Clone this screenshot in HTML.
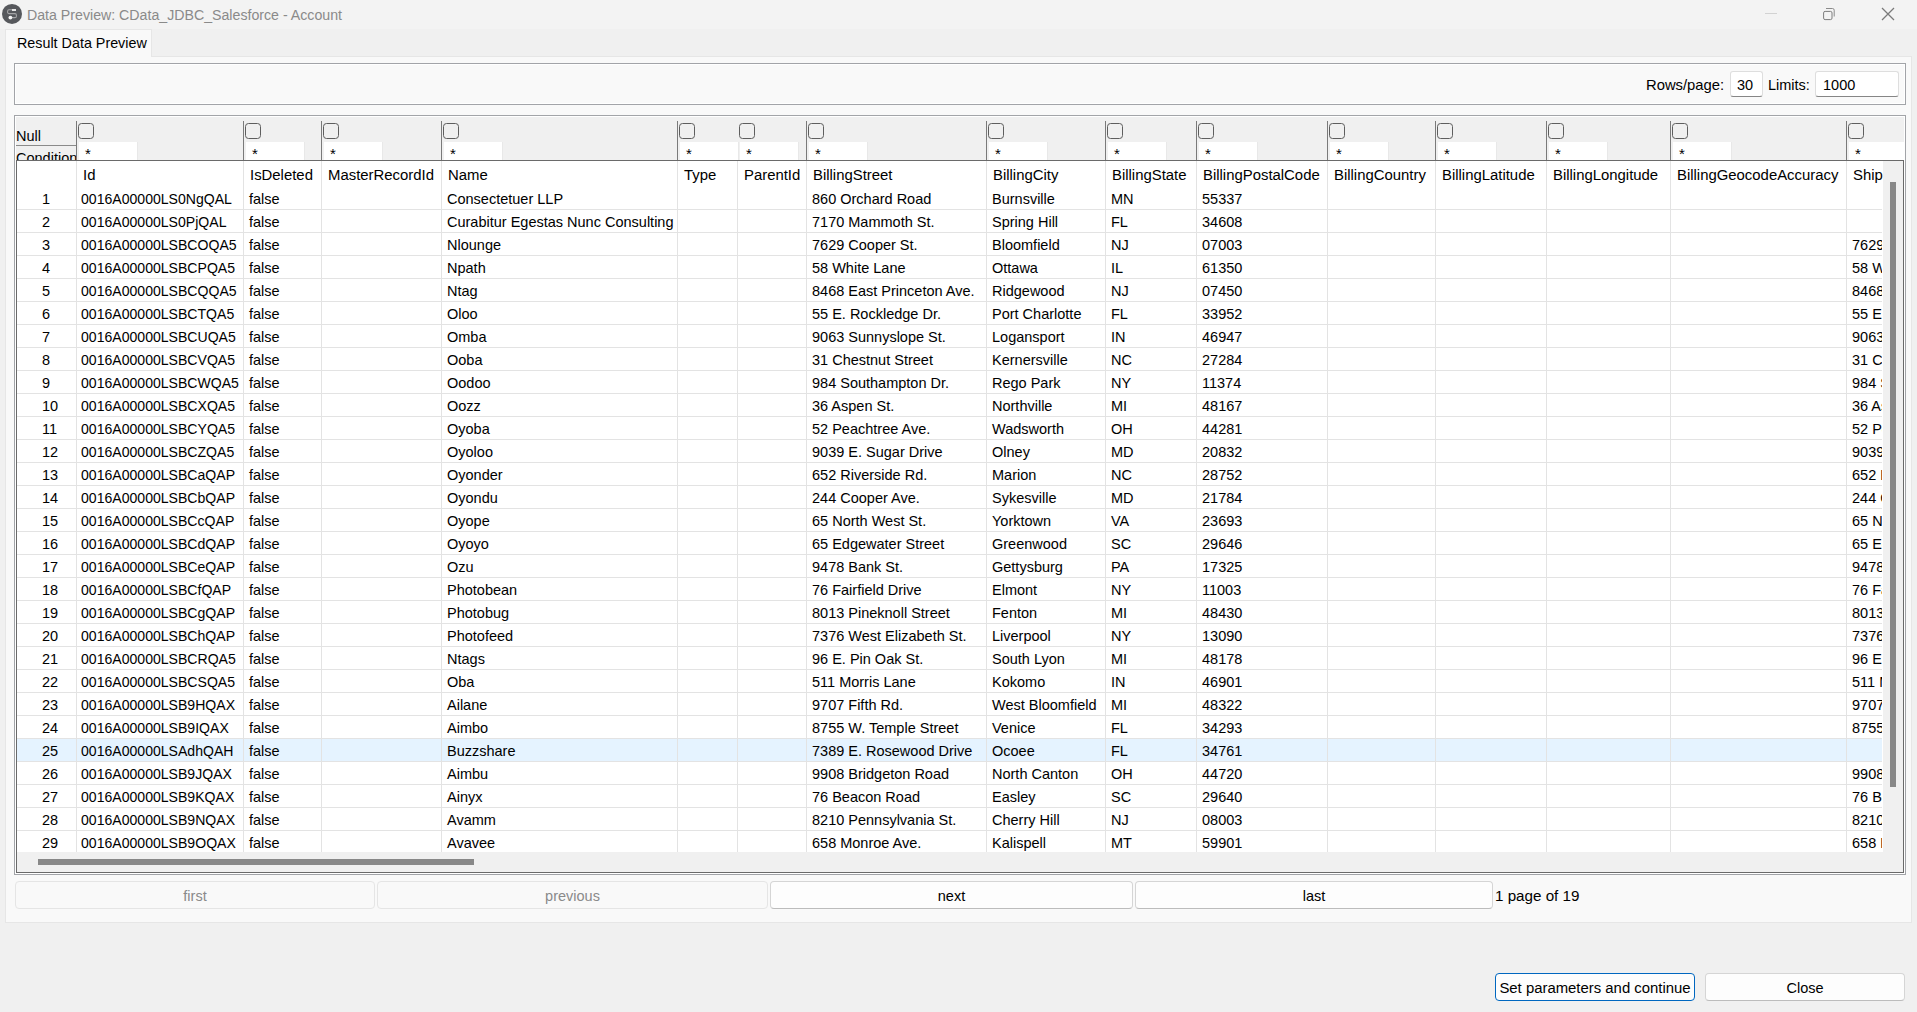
<!DOCTYPE html>
<html><head><meta charset="utf-8">
<style>
*{box-sizing:border-box}
html,body{margin:0;padding:0}
body{width:1917px;height:1012px;overflow:hidden;position:relative;background:#f0f0f0;font-family:"Liberation Sans",sans-serif;font-size:14.5px;color:#000}
.abs{position:absolute}
#titlebar{position:absolute;left:0;top:0;width:1917px;height:29px;background:#f3f3f3}
#title{position:absolute;left:27px;top:5.5px;font-size:15.5px;line-height:18px;color:#8a8a8a;white-space:nowrap;transform:scaleX(0.914);transform-origin:0 0}
#tabbar{position:absolute;left:152px;top:29px;width:1760px;height:27px;background:#f0f0f0}
#tab{position:absolute;left:5px;top:29px;width:147px;height:28px;background:#f9f9f9;border:1px solid #e6e6e6;border-bottom:none;z-index:2}
#tab span{position:absolute;left:10.5px;top:4px;font-size:15px;line-height:18px;white-space:nowrap;transform:scaleX(0.955);transform-origin:0 0}
#panel{position:absolute;left:5px;top:56px;width:1907px;height:867px;background:#f9f9f9;border:1px solid #e6e6e6}
#box1{position:absolute;left:14px;top:63px;width:1892px;height:42px;border:1px solid #a2a4a8;background:#f9f9f9;box-shadow:inset 1px 1px 0 #fff,inset -1px -1px 0 #fff}
.lbl{position:absolute;white-space:nowrap;line-height:18px}
.inp{position:absolute;background:#fff;border:1px solid #dedede;border-bottom:1px solid #868686;border-radius:3px}
#box2{position:absolute;left:14px;top:115px;width:1892px;height:760px;border:1px solid #a2a4a8;background:#f9f9f9;box-shadow:inset 1px 1px 0 #fff,inset -1px -1px 0 #fff}
#fhdr{position:absolute;left:16px;top:117px;width:1888px;height:44px;background:#f0f0f0}
.fsep{position:absolute;top:121px;width:1px;height:40px;background:#7a7a7a}
.cb{position:absolute;top:123px;width:16px;height:16px;border:1.2px solid #5e5e5e;border-radius:3.5px;background:#f0f0f0}
.tf{position:absolute;top:142px;height:18px;background:#fff;border-right:1px solid #e8e8e8}
.tf span{position:absolute;left:6px;top:3px;font-size:15px;line-height:18px}
#nullsep{position:absolute;left:16px;top:145px;width:60px;height:1px;background:#8a8a8a}
#nullsep2{position:absolute;left:16px;top:146px;width:60px;height:1px;background:#f9f9f9}
#table{position:absolute;left:16px;top:160px;width:1888px;height:713px;border:1px solid #6a6a6a;background:#f0f0f0;overflow:hidden}
#grid{position:absolute;left:0;top:0;width:1866px;height:691px;background:#fff;overflow:hidden}
.vl{position:absolute;top:0;width:1px;height:691px;background:#e3e3e3;z-index:1}
.ht{position:absolute;top:0;line-height:26px;padding-top:1px;white-space:nowrap;font-size:14.9px}
.row{position:absolute;left:0;width:1865px;overflow:hidden;height:23px;border-bottom:1px solid #e3e3e3}
.row.sel{background:#e5f3ff}
.row span{position:absolute;top:1px;line-height:22px;white-space:nowrap}
.rn{left:25px}
.idc{transform:scaleX(0.97);transform-origin:0 0}
#vsb{position:absolute;left:1866px;top:0;width:20px;height:691px;background:#f0f0f0}
#vthumb{position:absolute;left:1873px;top:21px;width:6px;height:605px;background:#888;border-radius:0}
#hthumb{position:absolute;left:21px;top:698px;width:436px;height:6px;background:#888}
.btn{position:absolute;top:881px;height:28px;border:1px solid #e5e5e5;border-radius:4px;background:#f9f9f9;text-align:center;line-height:26px;padding-top:1px;color:#8a8a8a}
.btn.en{background:#fdfdfd;border-color:#d5d5d5;border-bottom-color:#bcbcbc;color:#000}
</style></head><body>
<div id="titlebar">
  <svg class="abs" style="left:0;top:0" width="30" height="28" viewBox="0 0 30 28">
    <circle cx="12" cy="13.9" r="10" fill="#56585c"/>
    <path d="M11.5 17.6 H15 a1.4 1.4 0 0 0 1.4 -1.4 V15 a1.4 1.4 0 0 0 -1.4 -1.4 H9 a1.4 1.4 0 0 1 -1.4 -1.4 V11.2 a1.4 1.4 0 0 1 1.4 -1.4 H12.5" fill="none" stroke="#a4a4a6" stroke-width="1.1"/>
    <rect x="12" y="9" width="4" height="2" fill="#e6e6e6"/>
    <circle cx="10.4" cy="17.6" r="1.9" fill="#f4f4f4"/>
  </svg>
  <div id="title">Data Preview: CData_JDBC_Salesforce - Account</div>
  <div class="abs" style="left:1765px;top:13px;width:12px;height:1px;background:#d2d2d2"></div>
  <svg class="abs" style="left:1820px;top:6px" width="18" height="16" viewBox="0 0 18 16">
    <rect x="3.6" y="5.4" width="8.4" height="8.2" rx="1.5" fill="none" stroke="#7c7c7c" stroke-width="1"/>
    <path d="M6 2.5 H12.5 a1.7 1.7 0 0 1 1.7 1.7 V10.5" fill="none" stroke="#8a8a8a" stroke-width="1"/>
  </svg>
  <svg class="abs" style="left:1880px;top:6px" width="16" height="16" viewBox="0 0 16 16">
    <path d="M2 2 L14 14 M14 2 L2 14" stroke="#7a7a7a" stroke-width="1.25"/>
  </svg>
</div>
<div id="panel"></div>
<div id="tabbar"></div>
<div id="tab"><span>Result Data Preview</span></div>
<div id="box1">
  <div class="lbl" style="left:1631px;top:12px;font-size:14.8px">Rows/page:</div>
  <div class="inp" style="left:1715px;top:7px;width:33px;height:26px"><span class="lbl" style="left:6px;top:4px">30</span></div>
  <div class="lbl" style="left:1753px;top:12px">Limits:</div>
  <div class="inp" style="left:1800px;top:7px;width:84px;height:26px"><span class="lbl" style="left:7px;top:4px">1000</span></div>
</div>
<div id="box2"></div>
<div id="fhdr"></div>
<div class="lbl" style="left:16px;top:127px">Null</div>
<div class="lbl" style="left:16px;top:149px;width:60px;height:11px;overflow:hidden">Condition</div>
<div id="nullsep"></div>
<div class="fsep" style="left:76px"></div>
<div class="fsep" style="left:76px"></div>
<div class="cb" style="left:78px"></div>
<div class="tf" style="left:79px;width:59px;"><span>*</span></div>
<div class="fsep" style="left:243px"></div>
<div class="cb" style="left:245px"></div>
<div class="tf" style="left:246px;width:59px;"><span>*</span></div>
<div class="fsep" style="left:321px"></div>
<div class="cb" style="left:323px"></div>
<div class="tf" style="left:324px;width:59px;"><span>*</span></div>
<div class="fsep" style="left:441px"></div>
<div class="cb" style="left:443px"></div>
<div class="tf" style="left:444px;width:59px;"><span>*</span></div>
<div class="fsep" style="left:677px"></div>
<div class="cb" style="left:679px"></div>
<div class="tf" style="left:680px;width:59px;"><span>*</span></div>
<div class="cb" style="left:739px"></div>
<div class="tf" style="left:740px;width:59px;"><span>*</span></div>
<div class="fsep" style="left:806px"></div>
<div class="cb" style="left:808px"></div>
<div class="tf" style="left:809px;width:59px;"><span>*</span></div>
<div class="fsep" style="left:986px"></div>
<div class="cb" style="left:988px"></div>
<div class="tf" style="left:989px;width:59px;"><span>*</span></div>
<div class="fsep" style="left:1105px"></div>
<div class="cb" style="left:1107px"></div>
<div class="tf" style="left:1108px;width:59px;"><span>*</span></div>
<div class="fsep" style="left:1196px"></div>
<div class="cb" style="left:1198px"></div>
<div class="tf" style="left:1199px;width:59px;"><span>*</span></div>
<div class="fsep" style="left:1327px"></div>
<div class="cb" style="left:1329px"></div>
<div class="tf" style="left:1330px;width:59px;"><span>*</span></div>
<div class="fsep" style="left:1435px"></div>
<div class="cb" style="left:1437px"></div>
<div class="tf" style="left:1438px;width:59px;"><span>*</span></div>
<div class="fsep" style="left:1546px"></div>
<div class="cb" style="left:1548px"></div>
<div class="tf" style="left:1549px;width:59px;"><span>*</span></div>
<div class="fsep" style="left:1670px"></div>
<div class="cb" style="left:1672px"></div>
<div class="tf" style="left:1673px;width:59px;"><span>*</span></div>
<div class="fsep" style="left:1846px"></div>
<div class="cb" style="left:1848px"></div>
<div class="tf" style="left:1849px;width:55px;border-right:none;"><span>*</span></div>
<div id="table">
 <div id="grid">
<div class="vl" style="left:59px"></div>
<div class="vl" style="left:226px"></div>
<div class="vl" style="left:304px"></div>
<div class="vl" style="left:424px"></div>
<div class="vl" style="left:660px"></div>
<div class="vl" style="left:720px"></div>
<div class="vl" style="left:789px"></div>
<div class="vl" style="left:969px"></div>
<div class="vl" style="left:1088px"></div>
<div class="vl" style="left:1179px"></div>
<div class="vl" style="left:1310px"></div>
<div class="vl" style="left:1418px"></div>
<div class="vl" style="left:1529px"></div>
<div class="vl" style="left:1653px"></div>
<div class="vl" style="left:1829px"></div>
<div class="vl" style="left:59px"></div>
<div class="ht" style="left:66px">Id</div>
<div class="ht" style="left:233px">IsDeleted</div>
<div class="ht" style="left:311px">MasterRecordId</div>
<div class="ht" style="left:431px">Name</div>
<div class="ht" style="left:667px">Type</div>
<div class="ht" style="left:727px">ParentId</div>
<div class="ht" style="left:796px">BillingStreet</div>
<div class="ht" style="left:976px">BillingCity</div>
<div class="ht" style="left:1095px">BillingState</div>
<div class="ht" style="left:1186px">BillingPostalCode</div>
<div class="ht" style="left:1317px">BillingCountry</div>
<div class="ht" style="left:1425px">BillingLatitude</div>
<div class="ht" style="left:1536px">BillingLongitude</div>
<div class="ht" style="left:1660px">BillingGeocodeAccuracy</div>
<div class="ht" style="left:1836px">Ship</div>
<div class="row" style="top:26px"><span class="rn">1</span><span class="c idc" style="left:64px">0016A00000LS0NgQAL</span><span class="c" style="left:232px">false</span><span class="c" style="left:430px">Consectetuer LLP</span><span class="c" style="left:795px">860 Orchard Road</span><span class="c" style="left:975px">Burnsville</span><span class="c" style="left:1094px">MN</span><span class="c" style="left:1185px">55337</span></div>
<div class="row" style="top:49px"><span class="rn">2</span><span class="c idc" style="left:64px">0016A00000LS0PjQAL</span><span class="c" style="left:232px">false</span><span class="c" style="left:430px">Curabitur Egestas Nunc Consulting</span><span class="c" style="left:795px">7170 Mammoth St.</span><span class="c" style="left:975px">Spring Hill</span><span class="c" style="left:1094px">FL</span><span class="c" style="left:1185px">34608</span></div>
<div class="row" style="top:72px"><span class="rn">3</span><span class="c idc" style="left:64px">0016A00000LSBCOQA5</span><span class="c" style="left:232px">false</span><span class="c" style="left:430px">Nlounge</span><span class="c" style="left:795px">7629 Cooper St.</span><span class="c" style="left:975px">Bloomfield</span><span class="c" style="left:1094px">NJ</span><span class="c" style="left:1185px">07003</span><span class="c" style="left:1835px">7629 Cooper St.</span></div>
<div class="row" style="top:95px"><span class="rn">4</span><span class="c idc" style="left:64px">0016A00000LSBCPQA5</span><span class="c" style="left:232px">false</span><span class="c" style="left:430px">Npath</span><span class="c" style="left:795px">58 White Lane</span><span class="c" style="left:975px">Ottawa</span><span class="c" style="left:1094px">IL</span><span class="c" style="left:1185px">61350</span><span class="c" style="left:1835px">58 White Lane</span></div>
<div class="row" style="top:118px"><span class="rn">5</span><span class="c idc" style="left:64px">0016A00000LSBCQQA5</span><span class="c" style="left:232px">false</span><span class="c" style="left:430px">Ntag</span><span class="c" style="left:795px">8468 East Princeton Ave.</span><span class="c" style="left:975px">Ridgewood</span><span class="c" style="left:1094px">NJ</span><span class="c" style="left:1185px">07450</span><span class="c" style="left:1835px">8468 East Princeton Ave.</span></div>
<div class="row" style="top:141px"><span class="rn">6</span><span class="c idc" style="left:64px">0016A00000LSBCTQA5</span><span class="c" style="left:232px">false</span><span class="c" style="left:430px">Oloo</span><span class="c" style="left:795px">55 E. Rockledge Dr.</span><span class="c" style="left:975px">Port Charlotte</span><span class="c" style="left:1094px">FL</span><span class="c" style="left:1185px">33952</span><span class="c" style="left:1835px">55 E. Rockledge Dr.</span></div>
<div class="row" style="top:164px"><span class="rn">7</span><span class="c idc" style="left:64px">0016A00000LSBCUQA5</span><span class="c" style="left:232px">false</span><span class="c" style="left:430px">Omba</span><span class="c" style="left:795px">9063 Sunnyslope St.</span><span class="c" style="left:975px">Logansport</span><span class="c" style="left:1094px">IN</span><span class="c" style="left:1185px">46947</span><span class="c" style="left:1835px">9063 Sunnyslope St.</span></div>
<div class="row" style="top:187px"><span class="rn">8</span><span class="c idc" style="left:64px">0016A00000LSBCVQA5</span><span class="c" style="left:232px">false</span><span class="c" style="left:430px">Ooba</span><span class="c" style="left:795px">31 Chestnut Street</span><span class="c" style="left:975px">Kernersville</span><span class="c" style="left:1094px">NC</span><span class="c" style="left:1185px">27284</span><span class="c" style="left:1835px">31 Chestnut Street</span></div>
<div class="row" style="top:210px"><span class="rn">9</span><span class="c idc" style="left:64px">0016A00000LSBCWQA5</span><span class="c" style="left:232px">false</span><span class="c" style="left:430px">Oodoo</span><span class="c" style="left:795px">984 Southampton Dr.</span><span class="c" style="left:975px">Rego Park</span><span class="c" style="left:1094px">NY</span><span class="c" style="left:1185px">11374</span><span class="c" style="left:1835px">984 Southampton Dr.</span></div>
<div class="row" style="top:233px"><span class="rn">10</span><span class="c idc" style="left:64px">0016A00000LSBCXQA5</span><span class="c" style="left:232px">false</span><span class="c" style="left:430px">Oozz</span><span class="c" style="left:795px">36 Aspen St.</span><span class="c" style="left:975px">Northville</span><span class="c" style="left:1094px">MI</span><span class="c" style="left:1185px">48167</span><span class="c" style="left:1835px">36 Aspen St.</span></div>
<div class="row" style="top:256px"><span class="rn">11</span><span class="c idc" style="left:64px">0016A00000LSBCYQA5</span><span class="c" style="left:232px">false</span><span class="c" style="left:430px">Oyoba</span><span class="c" style="left:795px">52 Peachtree Ave.</span><span class="c" style="left:975px">Wadsworth</span><span class="c" style="left:1094px">OH</span><span class="c" style="left:1185px">44281</span><span class="c" style="left:1835px">52 Peachtree Ave.</span></div>
<div class="row" style="top:279px"><span class="rn">12</span><span class="c idc" style="left:64px">0016A00000LSBCZQA5</span><span class="c" style="left:232px">false</span><span class="c" style="left:430px">Oyoloo</span><span class="c" style="left:795px">9039 E. Sugar Drive</span><span class="c" style="left:975px">Olney</span><span class="c" style="left:1094px">MD</span><span class="c" style="left:1185px">20832</span><span class="c" style="left:1835px">9039 E. Sugar Drive</span></div>
<div class="row" style="top:302px"><span class="rn">13</span><span class="c idc" style="left:64px">0016A00000LSBCaQAP</span><span class="c" style="left:232px">false</span><span class="c" style="left:430px">Oyonder</span><span class="c" style="left:795px">652 Riverside Rd.</span><span class="c" style="left:975px">Marion</span><span class="c" style="left:1094px">NC</span><span class="c" style="left:1185px">28752</span><span class="c" style="left:1835px">652 Riverside Rd.</span></div>
<div class="row" style="top:325px"><span class="rn">14</span><span class="c idc" style="left:64px">0016A00000LSBCbQAP</span><span class="c" style="left:232px">false</span><span class="c" style="left:430px">Oyondu</span><span class="c" style="left:795px">244 Cooper Ave.</span><span class="c" style="left:975px">Sykesville</span><span class="c" style="left:1094px">MD</span><span class="c" style="left:1185px">21784</span><span class="c" style="left:1835px">244 Cooper Ave.</span></div>
<div class="row" style="top:348px"><span class="rn">15</span><span class="c idc" style="left:64px">0016A00000LSBCcQAP</span><span class="c" style="left:232px">false</span><span class="c" style="left:430px">Oyope</span><span class="c" style="left:795px">65 North West St.</span><span class="c" style="left:975px">Yorktown</span><span class="c" style="left:1094px">VA</span><span class="c" style="left:1185px">23693</span><span class="c" style="left:1835px">65 North West St.</span></div>
<div class="row" style="top:371px"><span class="rn">16</span><span class="c idc" style="left:64px">0016A00000LSBCdQAP</span><span class="c" style="left:232px">false</span><span class="c" style="left:430px">Oyoyo</span><span class="c" style="left:795px">65 Edgewater Street</span><span class="c" style="left:975px">Greenwood</span><span class="c" style="left:1094px">SC</span><span class="c" style="left:1185px">29646</span><span class="c" style="left:1835px">65 Edgewater Street</span></div>
<div class="row" style="top:394px"><span class="rn">17</span><span class="c idc" style="left:64px">0016A00000LSBCeQAP</span><span class="c" style="left:232px">false</span><span class="c" style="left:430px">Ozu</span><span class="c" style="left:795px">9478 Bank St.</span><span class="c" style="left:975px">Gettysburg</span><span class="c" style="left:1094px">PA</span><span class="c" style="left:1185px">17325</span><span class="c" style="left:1835px">9478 Bank St.</span></div>
<div class="row" style="top:417px"><span class="rn">18</span><span class="c idc" style="left:64px">0016A00000LSBCfQAP</span><span class="c" style="left:232px">false</span><span class="c" style="left:430px">Photobean</span><span class="c" style="left:795px">76 Fairfield Drive</span><span class="c" style="left:975px">Elmont</span><span class="c" style="left:1094px">NY</span><span class="c" style="left:1185px">11003</span><span class="c" style="left:1835px">76 Fairfield Drive</span></div>
<div class="row" style="top:440px"><span class="rn">19</span><span class="c idc" style="left:64px">0016A00000LSBCgQAP</span><span class="c" style="left:232px">false</span><span class="c" style="left:430px">Photobug</span><span class="c" style="left:795px">8013 Pineknoll Street</span><span class="c" style="left:975px">Fenton</span><span class="c" style="left:1094px">MI</span><span class="c" style="left:1185px">48430</span><span class="c" style="left:1835px">8013 Pineknoll Street</span></div>
<div class="row" style="top:463px"><span class="rn">20</span><span class="c idc" style="left:64px">0016A00000LSBChQAP</span><span class="c" style="left:232px">false</span><span class="c" style="left:430px">Photofeed</span><span class="c" style="left:795px">7376 West Elizabeth St.</span><span class="c" style="left:975px">Liverpool</span><span class="c" style="left:1094px">NY</span><span class="c" style="left:1185px">13090</span><span class="c" style="left:1835px">7376 West Elizabeth St.</span></div>
<div class="row" style="top:486px"><span class="rn">21</span><span class="c idc" style="left:64px">0016A00000LSBCRQA5</span><span class="c" style="left:232px">false</span><span class="c" style="left:430px">Ntags</span><span class="c" style="left:795px">96 E. Pin Oak St.</span><span class="c" style="left:975px">South Lyon</span><span class="c" style="left:1094px">MI</span><span class="c" style="left:1185px">48178</span><span class="c" style="left:1835px">96 E. Pin Oak St.</span></div>
<div class="row" style="top:509px"><span class="rn">22</span><span class="c idc" style="left:64px">0016A00000LSBCSQA5</span><span class="c" style="left:232px">false</span><span class="c" style="left:430px">Oba</span><span class="c" style="left:795px">511 Morris Lane</span><span class="c" style="left:975px">Kokomo</span><span class="c" style="left:1094px">IN</span><span class="c" style="left:1185px">46901</span><span class="c" style="left:1835px">511 Morris Lane</span></div>
<div class="row" style="top:532px"><span class="rn">23</span><span class="c idc" style="left:64px">0016A00000LSB9HQAX</span><span class="c" style="left:232px">false</span><span class="c" style="left:430px">Ailane</span><span class="c" style="left:795px">9707 Fifth Rd.</span><span class="c" style="left:975px">West Bloomfield</span><span class="c" style="left:1094px">MI</span><span class="c" style="left:1185px">48322</span><span class="c" style="left:1835px">9707 Fifth Rd.</span></div>
<div class="row" style="top:555px"><span class="rn">24</span><span class="c idc" style="left:64px">0016A00000LSB9IQAX</span><span class="c" style="left:232px">false</span><span class="c" style="left:430px">Aimbo</span><span class="c" style="left:795px">8755 W. Temple Street</span><span class="c" style="left:975px">Venice</span><span class="c" style="left:1094px">FL</span><span class="c" style="left:1185px">34293</span><span class="c" style="left:1835px">8755 W. Temple Street</span></div>
<div class="row sel" style="top:578px"><span class="rn">25</span><span class="c idc" style="left:64px">0016A00000LSAdhQAH</span><span class="c" style="left:232px">false</span><span class="c" style="left:430px">Buzzshare</span><span class="c" style="left:795px">7389 E. Rosewood Drive</span><span class="c" style="left:975px">Ocoee</span><span class="c" style="left:1094px">FL</span><span class="c" style="left:1185px">34761</span></div>
<div class="row" style="top:601px"><span class="rn">26</span><span class="c idc" style="left:64px">0016A00000LSB9JQAX</span><span class="c" style="left:232px">false</span><span class="c" style="left:430px">Aimbu</span><span class="c" style="left:795px">9908 Bridgeton Road</span><span class="c" style="left:975px">North Canton</span><span class="c" style="left:1094px">OH</span><span class="c" style="left:1185px">44720</span><span class="c" style="left:1835px">9908 Bridgeton Road</span></div>
<div class="row" style="top:624px"><span class="rn">27</span><span class="c idc" style="left:64px">0016A00000LSB9KQAX</span><span class="c" style="left:232px">false</span><span class="c" style="left:430px">Ainyx</span><span class="c" style="left:795px">76 Beacon Road</span><span class="c" style="left:975px">Easley</span><span class="c" style="left:1094px">SC</span><span class="c" style="left:1185px">29640</span><span class="c" style="left:1835px">76 Beacon Road</span></div>
<div class="row" style="top:647px"><span class="rn">28</span><span class="c idc" style="left:64px">0016A00000LSB9NQAX</span><span class="c" style="left:232px">false</span><span class="c" style="left:430px">Avamm</span><span class="c" style="left:795px">8210 Pennsylvania St.</span><span class="c" style="left:975px">Cherry Hill</span><span class="c" style="left:1094px">NJ</span><span class="c" style="left:1185px">08003</span><span class="c" style="left:1835px">8210 Pennsylvania St.</span></div>
<div class="row" style="top:670px"><span class="rn">29</span><span class="c idc" style="left:64px">0016A00000LSB9OQAX</span><span class="c" style="left:232px">false</span><span class="c" style="left:430px">Avavee</span><span class="c" style="left:795px">658 Monroe Ave.</span><span class="c" style="left:975px">Kalispell</span><span class="c" style="left:1094px">MT</span><span class="c" style="left:1185px">59901</span><span class="c" style="left:1835px">658 Monroe Ave.</span></div>
 </div>
 <div id="vsb"></div>
 <div id="vthumb"></div>
 <div id="hthumb"></div>
</div>
<div class="btn" style="left:15px;width:360px">first</div>
<div class="btn" style="left:377px;width:391px">previous</div>
<div class="btn en" style="left:770px;width:363px">next</div>
<div class="btn en" style="left:1135px;width:358px">last</div>
<div class="lbl" style="left:1495px;top:887px;font-size:15.2px">1 page of 19</div>
<div class="btn en" style="left:1495px;top:973px;width:200px;border:1px solid #0067c0;border-radius:4px;line-height:26px;font-size:14.9px;white-space:nowrap">Set parameters and continue</div>
<div class="btn en" style="left:1705px;top:973px;width:200px">Close</div>
</body></html>
